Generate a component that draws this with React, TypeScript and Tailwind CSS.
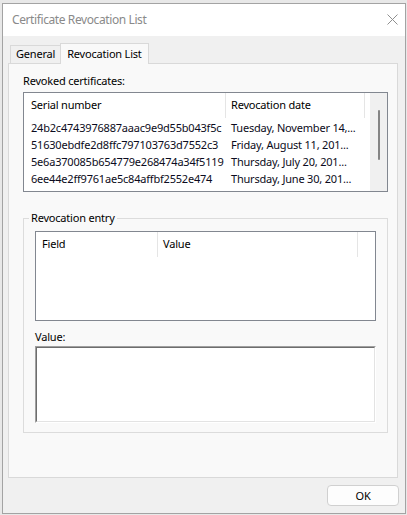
// date column is too narrow for the full timestamp, so the list shows it clipped
const revoked = [
  ["24b2c4743976887aaac9e9d55b043f5c", "Tuesday, November 14,..."],
  ["51630ebdfe2d8ffc797103763d7552c3", "Friday, August 11, 201..."],
  ["5e6a370085b654779e268474a34f5119", "Thursday, July 20, 201..."],
  ["6ee44e2ff9761ae5c84affbf2552e474", "Thursday, June 30, 201..."],
  ["7a2f01cc93e5b8d6e0c3f62b8e1d4a70", "Wednesday, May 18, 201..."],
];

const font = "font-['Noto_Sans','Liberation_Sans',sans-serif] text-[11px] tracking-[-0.2px]";

// header of a report-style list view
function ListHeader({ cols }: { cols: { label: string; w: string; pl: string }[] }) {
  return (
    <div className="flex h-[25px] shrink-0">
      {cols.map((c) => (
        <div
          key={c.label}
          className={`${c.w} ${c.pl} flex items-center border-r border-[#e5e5e5] text-black`}
        >
          {c.label}
        </div>
      ))}
    </div>
  );
}

export default function App() {
  return (
    <div className={`${font} w-[407px] h-[515px] bg-[#e8e8e8] pl-[2px] pt-[3px] pr-[1px] pb-[1px] flex`}>
      <div className="flex-1 flex flex-col border border-[#a3a3a3] bg-[#f0f0f0]">
        {/* title bar */}
        <div className="h-[32px] bg-white flex items-center justify-between pl-[9px] pr-[7px]">
          <span className="text-[12px] text-[#8a8a8a] tracking-[-0.4px]">Certificate Revocation List</span>
          <svg width="11" height="11" viewBox="0 0 11 11" className="mb-[1px]">
            <path d="M0.5 0.5 L10.5 10.5 M10.5 0.5 L0.5 10.5" stroke="#8f8f8f" strokeWidth="1" />
          </svg>
        </div>

        {/* tab strip */}
        <div className="flex items-end h-[27px] pl-[7px] pt-[6px]">
          <div className="h-[18px] px-[5px] border-t border-l border-[#d9d9d9] flex items-center text-black">
            General
          </div>
          <div className="h-[21px] px-[6px] border-t border-l border-r border-[#d9d9d9] bg-[#f9f9f9] flex items-start pt-[2px] text-black relative top-[1px] z-10">
            Revocation List
          </div>
        </div>

        {/* tab page */}
        <div className="ml-[5px] mr-[7px] h-[415px] border border-[#d9d9d9] bg-[#f9f9f9] flex flex-col pl-[14px] pr-[9px]">
          <div className="h-[12px] mt-[11px] leading-[12px] text-black">Revoked certificates:</div>
          <div className="mt-[5px] h-[100px] border border-[#828790] bg-white flex overflow-hidden">
            <div className="flex-1 flex flex-col overflow-hidden">
              <ListHeader
                cols={[
                  { label: "Serial number", w: "w-[202px]", pl: "pl-[7px]" },
                  { label: "Revocation date", w: "w-[139px]", pl: "pl-[5px]" },
                ]}
              />
              <div className="flex flex-col pt-[2px]">
                {revoked.map(([serial, date]) => (
                  <div key={serial} className="flex h-[17px] shrink-0 items-center text-[#0b0b20]">
                    <div className="w-[202px] pl-[7px] whitespace-nowrap">{serial}</div>
                    <div className="w-[139px] pl-[5px] whitespace-nowrap">{date}</div>
                  </div>
                ))}
              </div>
            </div>
            {/* vertical scroll bar */}
            <div className="w-[17px] bg-[#f0f0f0] flex justify-center pt-[17px]">
              <div className="w-[2px] h-[50px] bg-[#858585] rounded-full" />
            </div>
          </div>

          {/* group box */}
          <div className="mt-[26px] h-[215px] border border-[#dcdcdc] relative px-[11px] pt-[12px]">
            <div className="absolute -top-[8px] left-[5px] px-[2px] bg-[#f9f9f9] leading-[14px] text-black">
              Revocation entry
            </div>
            <div className="h-[90px] border border-[#828790] bg-white flex flex-col">
              <ListHeader
                cols={[
                  { label: "Field", w: "w-[122px]", pl: "pl-[6px]" },
                  { label: "Value", w: "w-[200px]", pl: "pl-[5px]" },
                ]}
              />
            </div>
            <div className="mt-[9px] h-[14px] leading-[14px] text-black">Value:</div>
            <div className="mt-[2px] h-[77px] border border-t-[#a0a0a0] border-l-[#a0a0a0] border-r-white border-b-white">
              <div className="h-full border border-t-[#6d6d6d] border-l-[#6d6d6d] border-r-[#e3e3e3] border-b-[#e3e3e3] bg-white" />
            </div>
          </div>
        </div>

        {/* dialog buttons */}
        <div className="flex justify-end pr-[6px] pt-[7px]">
          <button className="w-[72px] h-[21px] rounded-[4px] border border-[#d0d0d0] bg-[#fdfdfd] text-black text-[11px] leading-none">
            OK
          </button>
        </div>
      </div>
    </div>
  );
}
